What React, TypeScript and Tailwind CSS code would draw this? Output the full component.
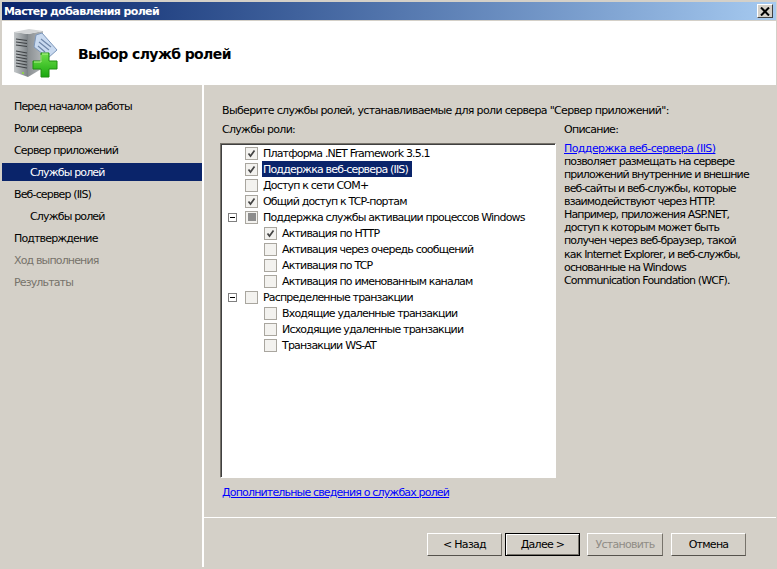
import React from 'react';

type Row = {
  label: string;
  level: 1 | 2;
  state?: 'checked' | 'mixed' | 'empty';
  expander?: boolean;
  selected?: boolean;
};

const ROWS: Row[] = [
  { label: 'Платформа .NET Framework 3.5.1', level: 1, state: 'checked' },
  { label: 'Поддержка веб-сервера (IIS)', level: 1, state: 'checked', selected: true },
  { label: 'Доступ к сети COM+', level: 1, state: 'empty' },
  { label: 'Общий доступ к TCP-портам', level: 1, state: 'checked' },
  { label: 'Поддержка службы активации процессов Windows', level: 1, state: 'mixed', expander: true },
  { label: 'Активация по HTTP', level: 2, state: 'checked' },
  { label: 'Активация через очередь сообщений', level: 2, state: 'empty' },
  { label: 'Активация по TCP', level: 2, state: 'empty' },
  { label: 'Активация по именованным каналам', level: 2, state: 'empty' },
  { label: 'Распределенные транзакции', level: 1, state: 'empty', expander: true },
  { label: 'Входящие удаленные транзакции', level: 2, state: 'empty' },
  { label: 'Исходящие удаленные транзакции', level: 2, state: 'empty' },
  { label: 'Транзакции WS-AT', level: 2, state: 'empty' },
];

const STEPS = [
  { label: 'Перед началом работы' },
  { label: 'Роли сервера' },
  { label: 'Сервер приложений' },
  { label: 'Службы ролей', sub: true, active: true },
  { label: 'Веб-сервер (IIS)' },
  { label: 'Службы ролей', sub: true },
  { label: 'Подтверждение' },
  { label: 'Ход выполнения', muted: true },
  { label: 'Результаты', muted: true },
];

const Checkbox = ({ state }: { state?: Row['state'] }) => (
  <span className="w-[13px] h-[13px] shrink-0 border border-[#a9a69f] bg-[#f3f2ef] flex items-center justify-center">
    {state === 'checked' && (
      <svg width="11" height="11" viewBox="0 0 11 11">
        <path d="M2.5 5.5 L4.5 8 L8.5 2.5" fill="none" stroke="#444" strokeWidth="1.7" />
      </svg>
    )}
    {state === 'mixed' && <span className="w-[8px] h-[8px] bg-[#8d8d8d]" />}
  </span>
);

const Button = ({ label, primary, disabled, wide }: { label: string; primary?: boolean; disabled?: boolean; wide?: boolean }) => (
  <div
    className={`${wide ? 'w-[76px]' : 'w-[75px]'} h-[23px] flex items-center justify-center ${
      primary
        ? 'border border-black shadow-[inset_1px_1px_0_#fff,inset_-1px_-1px_0_#77736b]'
        : 'border border-t-white border-l-white border-r-[#77736b] border-b-[#55524c]'
    } ${disabled ? 'text-[#8f8c85]' : 'text-black'}`}
  >
    {label}
  </div>
);

const WizardIcon = () => (
  <svg width="46" height="50" viewBox="0 0 46 50" className="shrink-0">
    <defs>
      <linearGradient id="front" x1="0" x2="1" y1="0" y2="0">
        <stop offset="0" stopColor="#c4c8ca" />
        <stop offset="1" stopColor="#7c8286" />
      </linearGradient>
      <linearGradient id="side" x1="0" x2="1" y1="0" y2="0">
        <stop offset="0" stopColor="#8a8f92" />
        <stop offset="1" stopColor="#b4b8ba" />
      </linearGradient>
      <linearGradient id="plus" x1="0" x2="0" y1="0" y2="1">
        <stop offset="0" stopColor="#6fe04a" />
        <stop offset="1" stopColor="#19a80f" />
      </linearGradient>
    </defs>
    <path d="M15 6 L30 3 L30 40 L15 49 Z" fill="url(#side)" />
    <path d="M1 4 L15 6 L15 49 L1 44 Z" fill="url(#front)" />
    <path d="M1 4 L16 1 L30 3 L15 6 Z" fill="#d3d5d6" />
    <path d="M3 11 L14 12.5 M3 14 L14 15.5 M3 17 L14 18.5 M3 23 L14 25 M3 26 L14 28 M3 29 L14 31 M3 32 L14 34 M3 35 L14 37 M3 38 L14 40" stroke="#3d4144" strokeWidth="1.2" />
    <rect x="9" y="44" width="2" height="2" fill="#8fd14f" />
    <path d="M23 7 L29 5 L44 22 L35 30 L21 19 Z" fill="#c9daf0" stroke="#7d97bb" />
    <path d="M26 14 L36 22 M28 11 L38 19 M25 18 L32 24" stroke="#6f86a8" strokeWidth="1.2" />
    <path d="M28 25 H36 V33 H44 V41 H36 V49 H28 V41 H20 V33 H28 Z" fill="url(#plus)" stroke="#1f8e10" />
    <path d="M29 26 H35 M21 34 H28 V27" fill="none" stroke="#b5f090" />
  </svg>
);

export default function App() {
  return (
    <div className="w-[777px] h-[569px] overflow-hidden bg-[#d4d0c8] p-[2px] pr-[1px] text-[11px] leading-[13px] text-black font-['DejaVu_Sans','Liberation_Sans',sans-serif] tracking-[-0.72px] flex flex-col">
      {/* Заголовок окна */}
      <div className="h-[18px] shrink-0 flex items-center justify-between pl-[2px] pr-[3px] bg-gradient-to-r from-[#0a246a] to-[#a6caf0]">
        <span className="text-white font-bold tracking-[-0.62px]">Мастер добавления ролей</span>
        <div className="w-[16px] h-[14px] bg-[#d4d0c8] border border-t-white border-l-white border-r-[#404040] border-b-[#404040] flex items-center justify-center">
          <svg width="10" height="9" viewBox="0 0 10 9">
            <path d="M1 0.5 L9 8.5 M9 0.5 L1 8.5" stroke="#000" strokeWidth="2" />
          </svg>
        </div>
      </div>

      {/* Шапка */}
      <div className="h-[64px] shrink-0 mt-px bg-white flex items-center pl-[11px] gap-[19px]">
        <WizardIcon />
        <span className="pt-[2px] text-[14px] font-bold tracking-[-0.6px]">Выбор служб ролей</span>
      </div>

      <div className="flex-1 flex min-h-0">
        {/* Шаги мастера */}
        <div className="w-[200px] shrink-0 pt-[12px] tracking-[-0.85px]">
          {STEPS.map((s, i) => (
            <div
              key={i}
              className={`h-[18px] mb-[4px] flex items-center ${s.sub ? 'pl-[28px]' : 'pl-[12px]'} ${
                s.active ? 'bg-[#0a246a] text-white' : s.muted ? 'text-[#77736b]' : ''
              }`}
            >
              {s.label}
            </div>
          ))}
        </div>
        <div className="w-[2px] shrink-0 bg-white" />

        {/* Основная панель */}
        <div className="flex-1 flex flex-col">
          <div className="h-[432px] shrink-0 pt-[19px] pl-[16px]">
            <div className="h-[13px] pl-[2px] tracking-[-0.66px]">
              Выберите службы ролей, устанавливаемые для роли сервера "Сервер приложений":
            </div>
            <div className="flex mt-[6px]">
              <div className="w-[336px] shrink-0">
                <div className="h-[13px] pl-[2px]">Службы роли:</div>
                <div className="mt-[7px] h-[335px] bg-white border border-t-[#77736b] border-l-[#77736b] border-r-white border-b-white shadow-[inset_1px_1px_0_#404040] pt-[1px] pl-[7px] tracking-[-0.82px]">
                  {ROWS.map((r, i) => (
                    <div key={i} className="h-[16px] flex items-center">
                      <span className="w-[9px] h-[9px] shrink-0 mr-[8px] flex items-center justify-center">
                        {r.expander && (
                          <span className="w-[9px] h-[9px] border border-[#808080] bg-white flex items-center justify-center">
                            <span className="w-[5px] h-px bg-black" />
                          </span>
                        )}
                      </span>
                      {r.level === 2 && <span className="w-[19px] shrink-0" />}
                      <Checkbox state={r.state} />
                      <span
                        className={`ml-[4px] px-[1px] h-[16px] flex items-center whitespace-nowrap ${
                          r.selected ? 'bg-[#0a246a] text-white pr-[4px]' : ''
                        }`}
                      >
                        {r.label}
                      </span>
                    </div>
                  ))}
                </div>
                <div className="mt-[8px] pl-[2px] tracking-[-0.83px]">
                  <a className="text-[#0000ff] underline">Дополнительные сведения о службах ролей</a>
                </div>
              </div>
              <div className="pl-[8px] w-[205px] whitespace-nowrap">
                <div className="h-[13px]">Описание:</div>
                <div className="mt-[6px] leading-[13.2px] tracking-[-0.85px]">
                  <a className="text-[#0000ff] underline tracking-[-0.58px]">Поддержка веб-сервера (IIS)</a>
                  <br />позволяет размещать на сервере
                  <br />приложений внутренние и внешние
                  <br />веб-сайты и веб-службы, которые
                  <br />взаимодействуют через HTTP.
                  <br />Например, приложения ASP.NET,
                  <br />доступ к которым может быть
                  <br />получен через веб-браузер, такой
                  <br />как Internet Explorer, и веб-службы,
                  <br />основанные на Windows
                  <br />Communication Foundation (WCF).
                </div>
              </div>
            </div>
          </div>
          <div className="h-px shrink-0 bg-white" />
          <div className="flex-1 flex justify-end items-start pt-[15px] pr-[30px]">
            <Button label="< Назад" />
            <span className="w-[3px]" />
            <Button label="Далее >" primary />
            <span className="w-[7px]" />
            <Button label="Установить" disabled wide />
            <span className="w-[8px]" />
            <Button label="Отмена" />
          </div>
        </div>
      </div>
    </div>
  );
}
